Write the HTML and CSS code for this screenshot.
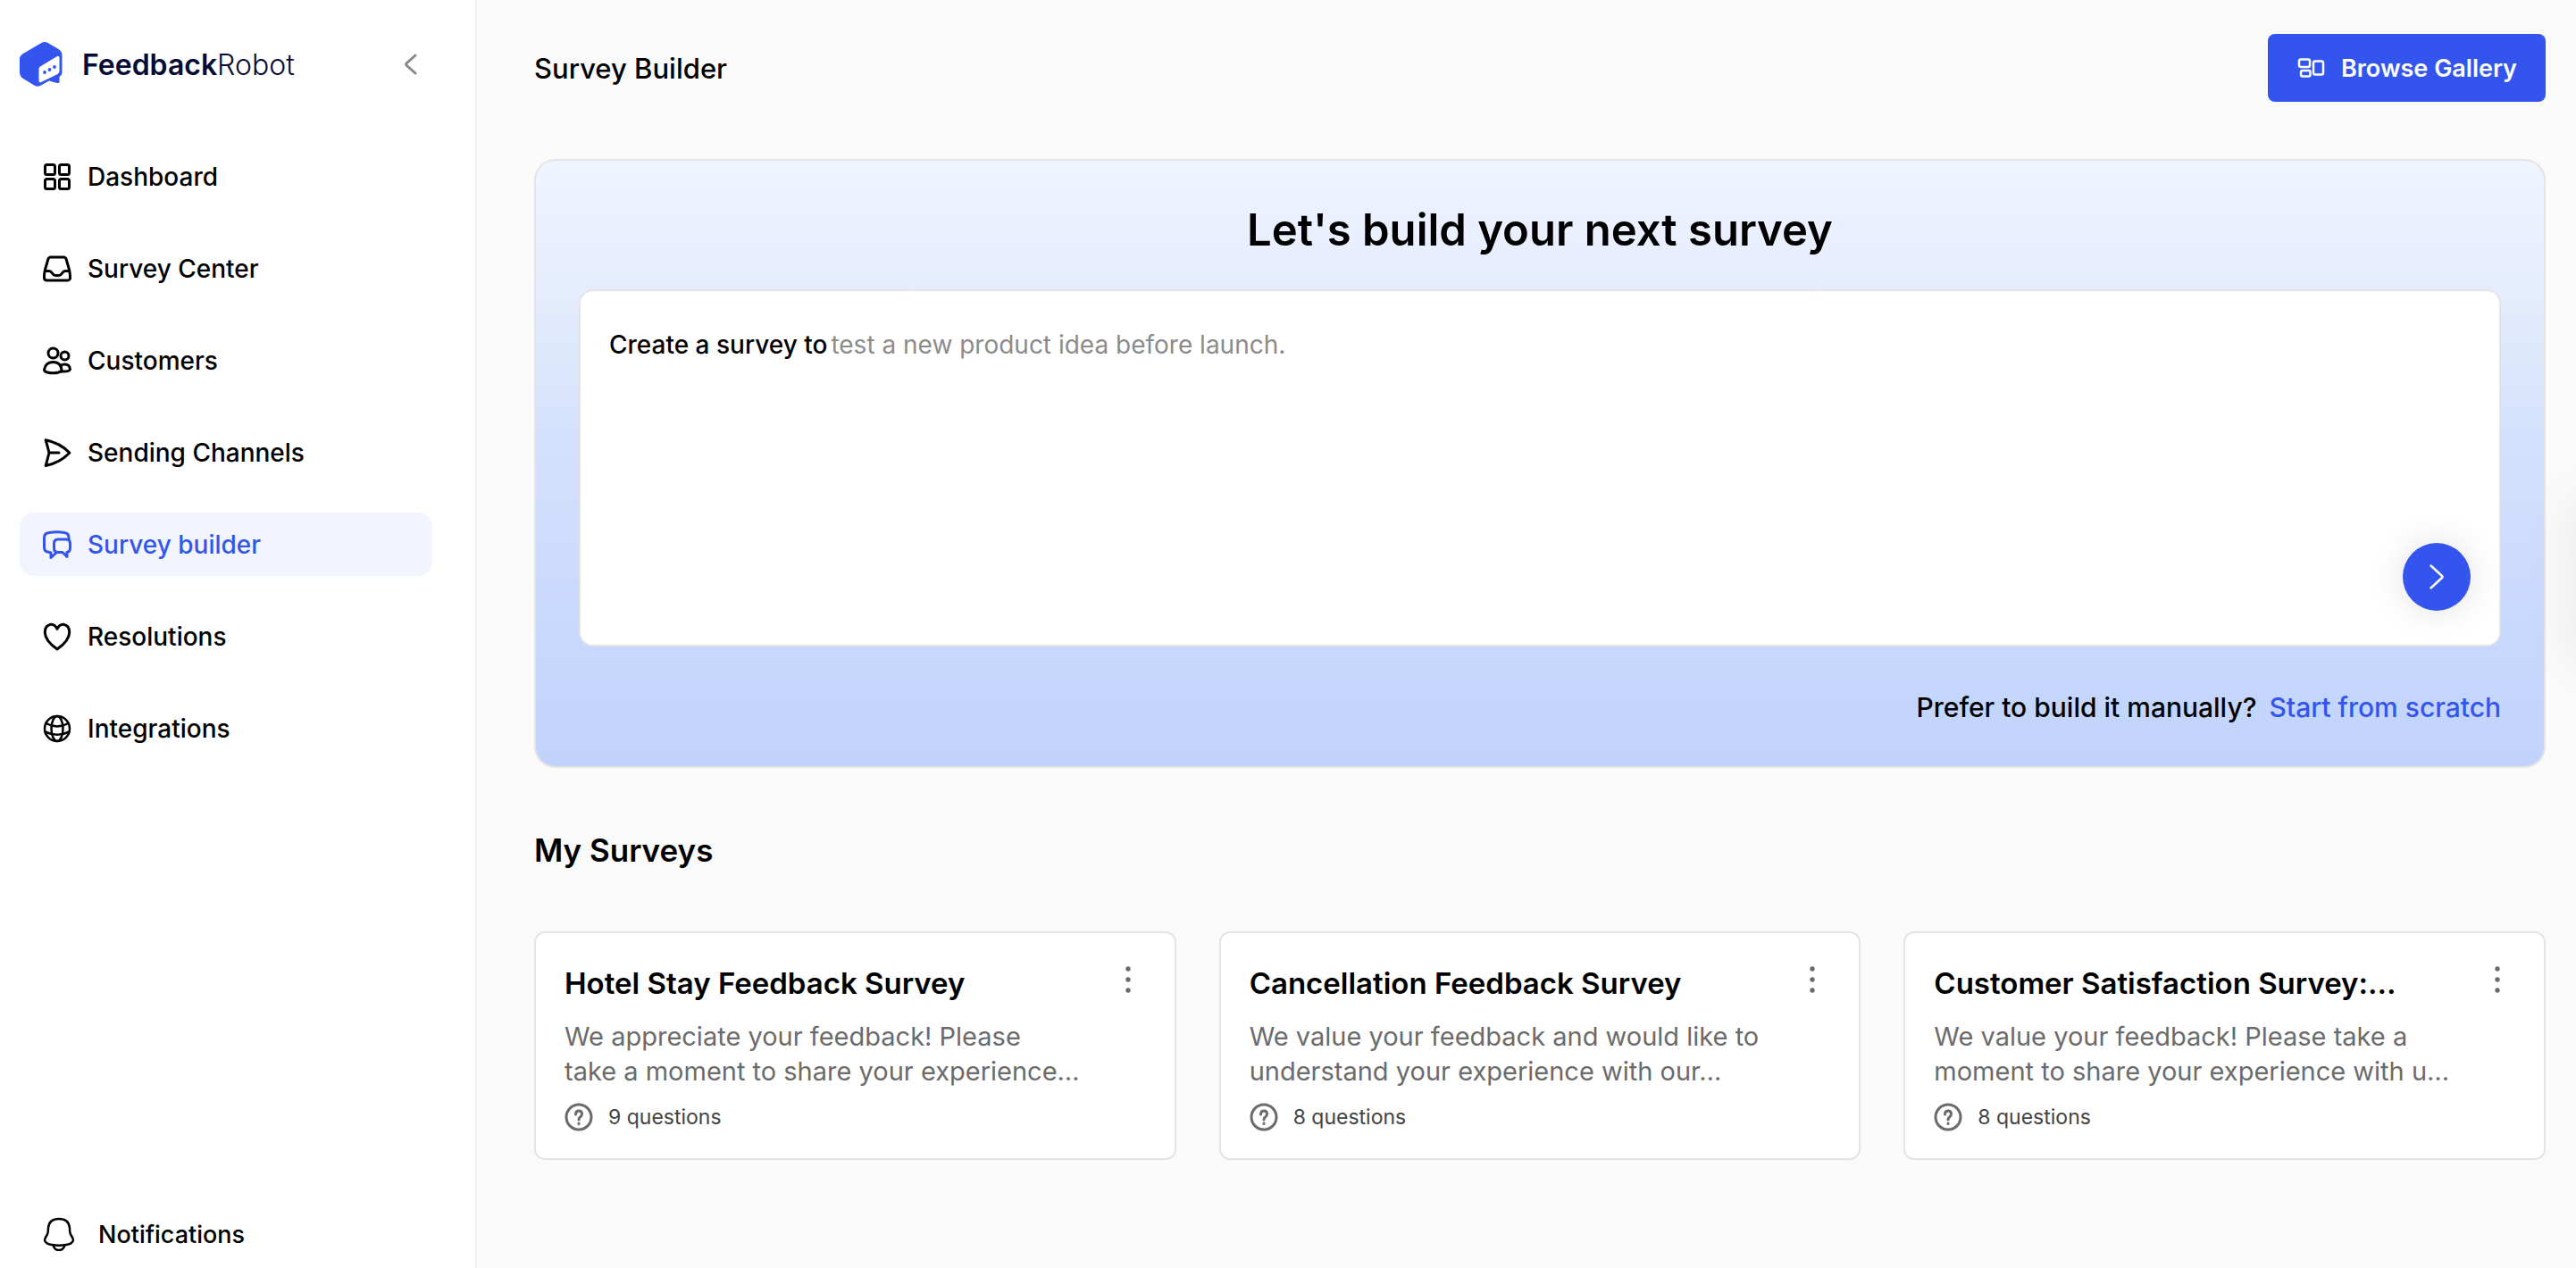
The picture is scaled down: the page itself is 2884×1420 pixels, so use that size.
FILE: index.html
```html
<!DOCTYPE html>
<html lang="en">

<head>
    <meta charset="UTF-8">
    <meta name="viewport" content="width=device-width, initial-scale=1.0">
    <title>Survey Builder - FeedbackRobot</title>
    <link rel="stylesheet" href="styles.css">
</head>

<body>

    <div class="layout">
        <aside class="sidebar">
            <div class="brand">
                <svg class="brand-logo" viewBox="0 0 48 50" aria-hidden="true">
                    <path fill="#3355ee" d="M24 1.2Q28 -1 32 1.2L43.5 8Q47.5 10.5 47.5 15V34Q47.500 37 44.5 39V45.5Q43 47 33 43.5L23 49Q20 50.5 17 49L4 41Q0 38.5 0 34V19Q0 15.5 4 13Z" />
                    <path fill="#ffffff" d="M23 27.5L42 16Q44.500 15 44.500 18V32.500Q44.500 34.500 42.500 36L24 45Q21.500 46 21.500 43V30Q21.500 28.500 23 27.500Z" />
                    <circle cx="28" cy="34" r="1.900" fill="#3355ee" />
                    <circle cx="33.500" cy="31" r="1.900" fill="#3355ee" />
                    <circle cx="39" cy="28" r="1.900" fill="#3355ee" />
                </svg>
                <span class="brand-name"><b>Feedback</b>Robot</span>
                <button class="collapse" type="button" aria-label="Collapse menu">
                    <svg viewBox="0 0 24 24"><path d="M17 2L7.500 10.500Q6 12 7.500 13.500L17 22" /></svg>
                </button>
            </div>

            <nav class="nav">
                <a class="nav-item" href="#">
                    <svg viewBox="0 0 32 32"><rect x="2.500" y="2.500" width="11" height="11" rx="2" /><rect x="18.500" y="2.500" width="11" height="11" rx="2" /><rect x="2.500" y="18.500" width="11" height="11" rx="2" /><rect x="18.500" y="18.500" width="11" height="11" rx="2" /></svg>
                    Dashboard
                </a>
                <a class="nav-item" href="#">
                    <svg viewBox="0 0 32 32"><path d="M9 3H23Q25.500 3 26.200 5.500L29.500 17Q30.700 22 30.500 27Q30 29 27 29H5Q1.500 29 1.500 26Q1.300 22 2.500 17L5.800 5.500Q6.500 3 9 3Z" /><path d="M2.500 18.500H7Q9 18.500 10.500 21Q12 23.500 14 23.500H18Q20 23.500 21.500 21Q23 18.500 25 18.500H29.500" /></svg>
                    Survey Center
                </a>
                <a class="nav-item" href="#">
                    <svg viewBox="0 0 32 32"><circle cx="11.500" cy="7.500" r="5.500" /><circle cx="24.500" cy="10.500" r="4.500" /><path d="M1.500 26Q3 17.500 11.500 17.500Q20 17.500 21 26Q21 28 17.500 29Q11 30.700 5 29Q1.500 28 1.500 26Z" /><path d="M19.500 21.500Q21.500 20 24.500 20Q30 20 30.500 25.500Q29.500 28.500 20.500 28" /></svg>
                    Customers
                </a>
                <a class="nav-item" href="#">
                    <svg viewBox="0 0 32 32"><path d="M3.200 1.800Q19 5 29.800 16Q20 27 3.200 30.500Q5 24 7 16Q5 8 3.200 1.800Z" /><path d="M7 16H18" /></svg>
                    Sending Channels
                </a>
                <a class="nav-item active" href="#">
                    <svg viewBox="0 0 32 32"><path d="M29 10V8Q29 3 24 2.500Q16 1.200 7 2.500Q1.500 3 1.500 8V19Q1.500 24 6.500 24.300L9 25V30.500L15.500 24.500" /><path d="M17 10H26Q30.500 10 30.500 14.500V20Q30.500 24 27 24.500V29.500L22 24.500H17Q12.500 24.500 12.500 20V14.500Q12.500 10 17 10Z" /></svg>
                    Survey builder
                </a>
                <a class="nav-item" href="#">
                    <svg viewBox="0 0 32 32"><path d="M16 30Q2.300 20.500 2.300 11Q2.300 3.500 9 2.300Q13.500 2 16 7.500Q18.500 2 23 2.300Q29.700 3.500 29.700 11Q29.700 20.500 16 30Z" /></svg>
                    Resolutions
                </a>
                <a class="nav-item" href="#">
                    <svg class="globe" viewBox="0 0 32 32"><circle cx="16" cy="16" r="14" /><ellipse cx="16" cy="16" rx="6.500" ry="14" /><path d="M3.500 10Q16 17 28.500 10M2.500 19.500Q16 26 29.500 19.500" /></svg>
                    Integrations
                </a>
            </nav>

            <a class="notifications" href="#">
                <svg viewBox="0 0 36 38"><path d="M18 2Q29 2 30 12Q30 19 32 21Q34 24 34 26Q33 30 26 31Q18 32.500 10 31Q3 30 2 26Q2 24 4 21Q6 19 6 12Q7 2 18 2Z" /><path d="M11.500 31.500Q13 37 18 37Q23 37 24.500 31.500" /></svg>
                Notifications
            </a>
        </aside>

        <main class="main">
            <header class="topbar">
                <h1>Survey Builder</h1>
                <button class="browse" type="button">
                    <svg viewBox="0 0 32 32" aria-hidden="true"><rect x="3" y="6.500" width="12" height="8.500" rx="2" /><rect x="5" y="19" width="10.500" height="6.500" rx="2" /><rect x="19" y="8.500" width="11" height="15" rx="2" /></svg>
                    Browse Gallery
                </button>
            </header>

            <section class="builder">
                <h2>Let's build your next survey</h2>
                <form class="prompt">
                    <div class="prompt-line">
                        <label for="prompt">Create a survey to</label>
                        <textarea id="prompt" placeholder="test a new product idea before launch."></textarea>
                    </div>
                    <button class="go" type="submit" aria-label="Create survey">
                        <svg viewBox="0 0 32 32"><path d="M9.500 3.500L22 15Q23 16 22 17L9.500 28.500" /></svg>
                    </button>
                </form>
                <p class="manual">Prefer to build it manually? <a href="#">Start from scratch</a></p>
            </section>

            <h2 class="section-title">My Surveys</h2>

            <section class="cards">
                <article class="card">
                    <div class="card-head">
                        <h3>Hotel Stay Feedback Survey</h3>
                        <button class="more" type="button" aria-label="More options">
                            <svg viewBox="0 0 8 32"><circle cx="4" cy="4" r="2.700" /><circle cx="4" cy="16" r="2.700" /><circle cx="4" cy="28" r="2.700" /></svg>
                        </button>
                    </div>
                    <p>We appreciate your feedback! Please<br>take a moment to share your experience…</p>
                    <div class="count">
                        <svg viewBox="0 0 32 32" aria-hidden="true"><circle cx="16" cy="16" r="14" /><path d="M12.500 13Q12.500 9 16 9Q19.500 9 19.500 12.500Q19.500 14.500 17.500 16Q16 17 16 19" /><path d="M16 23V23.500" /></svg>
                        9 questions
                    </div>
                </article>
                <article class="card">
                    <div class="card-head">
                        <h3>Cancellation Feedback Survey</h3>
                        <button class="more" type="button" aria-label="More options">
                            <svg viewBox="0 0 8 32"><circle cx="4" cy="4" r="2.700" /><circle cx="4" cy="16" r="2.700" /><circle cx="4" cy="28" r="2.700" /></svg>
                        </button>
                    </div>
                    <p>We value your feedback and would like to<br>understand your experience with our…</p>
                    <div class="count">
                        <svg viewBox="0 0 32 32" aria-hidden="true"><circle cx="16" cy="16" r="14" /><path d="M12.500 13Q12.500 9 16 9Q19.500 9 19.500 12.500Q19.500 14.500 17.500 16Q16 17 16 19" /><path d="M16 23V23.500" /></svg>
                        8 questions
                    </div>
                </article>
                <article class="card">
                    <div class="card-head">
                        <h3>Customer Satisfaction Survey:…</h3>
                        <button class="more" type="button" aria-label="More options">
                            <svg viewBox="0 0 8 32"><circle cx="4" cy="4" r="2.700" /><circle cx="4" cy="16" r="2.700" /><circle cx="4" cy="28" r="2.700" /></svg>
                        </button>
                    </div>
                    <p>We value your feedback! Please take a<br>moment to share your experience with u…</p>
                    <div class="count">
                        <svg viewBox="0 0 32 32" aria-hidden="true"><circle cx="16" cy="16" r="14" /><path d="M12.500 13Q12.500 9 16 9Q19.500 9 19.500 12.500Q19.500 14.500 17.500 16Q16 17 16 19" /><path d="M16 23V23.500" /></svg>
                        8 questions
                    </div>
                </article>
            </section>
        </main>
    </div>

    <div class="drawer"></div>

</body>

</html>
```

FILE: styles.css
```css
* {
    box-sizing: border-box;
}

body {
    margin: 0;
    font-family: Inter, "Open Sans", sans-serif;
    font-size: 28px;
    color: #000;
    background-color: #fafafa;
}

h1,
h2,
h3,
p {
    margin: 0;
}

a {
    color: inherit;
    text-decoration: none;
}

button {
    font: inherit;
    padding: 0;
    border: none;
    background: none;
    cursor: pointer;
}

svg {
    display: block;
    flex-shrink: 0;
    fill: none;
    stroke: currentColor;
    stroke-width: 3;
    stroke-linecap: round;
    stroke-linejoin: round;
}

.layout {
    display: flex;
    min-height: 100vh;
}

/* Sidebar */
.sidebar {
    display: flex;
    flex-direction: column;
    flex-shrink: 0;
    width: 534px;
    padding: 44px 48px 12px 22px;
    background: #fff;
    border-right: 2px solid #f0f0f0;
}

.brand {
    display: flex;
    align-items: center;
    height: 56px;
    margin-bottom: 62px;
}

.brand-logo {
    width: 48px;
    height: 50px;
    stroke: none;
}

.brand-name {
    margin-left: 22px;
    font-size: 32px;
    font-weight: 300;
    color: #060c35;
}

.brand-name b {
    font-weight: 600;
}

.collapse {
    margin-left: auto;
    margin-right: 12px;
    color: #888;
}

.collapse svg {
    width: 24px;
    height: 24px;
}

.nav {
    display: flex;
    flex-direction: column;
    gap: 32px;
}

.nav-item {
    display: flex;
    align-items: center;
    gap: 18px;
    height: 71px;
    padding-left: 26px;
    border-radius: 16px;
    font-weight: 500;
}

.nav-item svg {
    width: 32px;
    height: 32px;
}

.nav-item .globe {
    stroke-width: 2.5;
}

.nav-item.active {
    background: #f2f5fe;
    color: #3355ee;
}

.notifications {
    display: flex;
    align-items: center;
    gap: 26px;
    height: 52px;
    margin-top: auto;
    padding-left: 26px;
    font-size: 27px;
    font-weight: 500;
}

.notifications svg {
    width: 36px;
    height: 38px;
    stroke-width: 2.5;
}

/* Main content */
.main {
    flex: 1;
    min-width: 0;
    padding: 38px 34px 64px 64px;
}

.topbar {
    display: flex;
    align-items: center;
    justify-content: space-between;
    margin-bottom: 64px;
}

.topbar h1 {
    font-size: 31px;
    font-weight: 500;
}

.browse {
    display: flex;
    align-items: center;
    gap: 18px;
    height: 76px;
    padding: 0 32px;
    border-radius: 8px;
    background: #3355ee;
    color: #fff;
    font-size: 27px;
    font-weight: 600;
}

.browse svg {
    width: 32px;
    height: 32px;
    stroke-width: 2.5;
}

.builder {
    padding: 48px 48px 46px;
    border: 2px solid #e4e4e4;
    border-radius: 24px;
    background: linear-gradient(#eff4ff, #e5ecfd 22%, #dce8fb 32%, #d4e1fd 46%, #c1d3fc);
}

.builder h2 {
    margin-bottom: 36px;
    font-size: 49px;
    font-weight: 600;
    line-height: 60px;
    text-align: center;
}

.prompt {
    display: flex;
    flex-direction: column;
    height: 400px;
    padding: 40px 32px 38px;
    border: 2px solid #e4e4e4;
    border-radius: 16px;
    background: #fff;
}

.prompt-line {
    display: flex;
    flex: 1;
    gap: 4px;
    line-height: 40px;
}

.prompt-line label {
    font-weight: 500;
}

.prompt-line textarea {
    flex: 1;
    padding: 0;
    border: none;
    outline: none;
    resize: none;
    background: none;
    font: inherit;
}

.prompt-line textarea::placeholder {
    color: #8b8b8b;
}

.go {
    display: flex;
    align-items: center;
    justify-content: center;
    align-self: flex-end;
    width: 76px;
    height: 76px;
    border-radius: 50%;
    background: #3355ee;
    color: #fff;
    box-shadow: 0 0 40px rgba(0, 0, 0, 0.12);
}

.go svg {
    width: 32px;
    height: 32px;
    stroke-width: 2.5;
}

.manual {
    margin-top: 48px;
    font-size: 30px;
    font-weight: 500;
    line-height: 40px;
    text-align: right;
}

.builder .manual {
    margin-top: 48px;
}

.manual a {
    margin-left: 6px;
    color: #3355ee;
}

.section-title {
    margin: 64px 0 63px;
    font-size: 35px;
    font-weight: 600;
    line-height: 56px;
}

.cards {
    display: grid;
    grid-template-columns: repeat(3, 1fr);
    gap: 48px;
}

.card {
    padding: 32px 32px 30px;
    border: 2px solid #e4e4e4;
    border-radius: 12px;
    background: #fff;
}

.card-head {
    display: flex;
    justify-content: space-between;
    margin-bottom: 16px;
}

.card h3 {
    font-size: 33px;
    font-weight: 600;
    line-height: 48px;
}

.more {
    align-self: flex-start;
    margin: 4px 16px 0 0;
    color: #6b6b6b;
}

.more svg {
    width: 8px;
    height: 32px;
    fill: currentColor;
    stroke: none;
}

.card p {
    color: #6b6b6b;
    font-size: 29px;
    line-height: 39px;
}

.count {
    display: flex;
    align-items: center;
    gap: 17px;
    margin-top: 16px;
    font-size: 23px;
    line-height: 32px;
    color: #444;
}

.count svg {
    width: 32px;
    height: 32px;
    color: #6b6b6b;
}

/* Closed drawer, only its shadow reaches the page */
.drawer {
    position: fixed;
    top: 560px;
    left: 100%;
    width: 80px;
    height: 180px;
    box-shadow: 0 0 60px rgba(0, 0, 0, 0.08);
}
```
